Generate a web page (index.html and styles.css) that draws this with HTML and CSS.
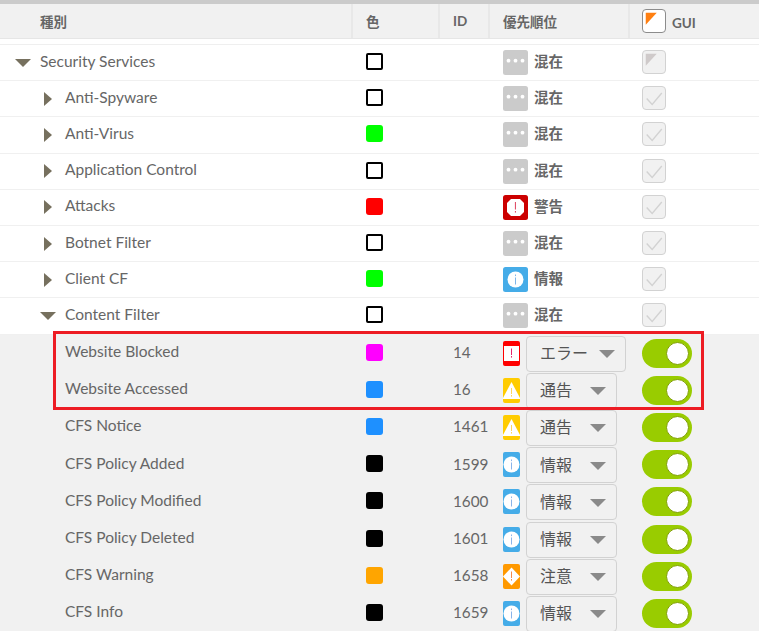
FILE: index.html
```html
<!DOCTYPE html>
<html lang="ja">
<head>
<meta charset="utf-8">
<title>種別</title>
<link rel="stylesheet" href="styles.css">
</head>
<body>
<svg class="defs" width="0" height="0" aria-hidden="true">
  <symbol id="i-mixed" viewBox="0 0 25 25"><rect width="25" height="25" rx="2.5" fill="#cbcbcb"/><circle cx="5.5" cy="10.7" r="1.9" fill="#fff"/><circle cx="12.5" cy="10.7" r="1.9" fill="#fff"/><circle cx="19.5" cy="10.7" r="1.9" fill="#fff"/></symbol>
  <symbol id="i-alert" viewBox="0 0 25 25"><rect width="25" height="25" rx="2.5" fill="#cc0000"/><polygon points="8,4 17,4 21,8 21,17 17,21 8,21 4,17 4,8" fill="#fff"/><rect x="11.9" y="7" width="1.1" height="7.5" fill="#e0506a"/><rect x="11.9" y="16" width="1.1" height="1.6" fill="#e0506a"/></symbol>
  <symbol id="i-info" viewBox="0 0 25 25"><rect width="25" height="25" rx="2.5" fill="#45ace8"/><circle cx="12.5" cy="12.5" r="8" fill="#fff"/><rect x="12" y="7.5" width="1" height="1.6" fill="#7fb6ea"/><rect x="12" y="10.5" width="1" height="7" fill="#7fb6ea"/></symbol>
  <symbol id="s-error" viewBox="0 0 17 25"><rect width="17" height="25" rx="2" fill="#ff0000"/><rect x="1" y="5" width="15" height="15" fill="#fff"/><rect x="8" y="7.5" width="1" height="6.5" fill="#e8246c"/><rect x="8" y="15" width="1" height="1.6" fill="#e8246c"/></symbol>
  <symbol id="s-warn" viewBox="0 0 17 25"><rect width="17" height="25" rx="2" fill="#ffcc00"/><polygon points="8.5,4 17,20 17,21 0,21 0,20" fill="#fff"/><rect x="8" y="10" width="1" height="6" fill="#ffd75a"/><rect x="8" y="17" width="1" height="1.6" fill="#ffd75a"/></symbol>
  <symbol id="s-info" viewBox="0 0 17 25"><rect width="17" height="25" rx="2" fill="#45ace8"/><circle cx="8.5" cy="12.5" r="8" fill="#fff"/><rect x="8" y="7.5" width="1" height="1.6" fill="#8ab4ea"/><rect x="8" y="10.5" width="1" height="7" fill="#8ab4ea"/></symbol>
  <symbol id="s-notice" viewBox="0 0 17 25"><rect width="17" height="25" rx="2" fill="#ff9900"/><polygon points="8.5,3.5 17,12.5 8.5,21.5 0,12.5" fill="#fff"/><rect x="8" y="7.5" width="1" height="6.5" fill="#f58a4a"/><rect x="8" y="15" width="1" height="1.6" fill="#f58a4a"/></symbol>
  <symbol id="c-tick" viewBox="0 0 24 24"><path d="M4 12.5 10 19 20.5 6.5" fill="none" stroke="#d2d2d2" stroke-width="1.5"/></symbol>
</svg>

<div class="grid-table">
  <div class="head">
    <div class="hcell name-h">種別</div>
    <div class="hcell">色</div>
    <div class="hcell">ID</div>
    <div class="hcell">優先順位</div>
    <div class="hcell last">
      <span class="check check-master"><svg viewBox="0 0 24 24" width="22" height="22"><polygon points="3,3 15,3 3,16" fill="#ff7f11"/></svg></span>
      <span class="gui">GUI</span>
    </div>
  </div>

  <div class="body">
    <div class="row group">
      <div class="name lv0"><span class="caret down"></span>Security Services</div>
      <div class="cc"><span class="sw outline"></span></div><div></div>
      <div class="pr"><svg class="pic"><use href="#i-mixed"/></svg><b>混在</b></div>
      <div class="gc"><span class="check"><svg viewBox="0 0 24 24" width="22" height="22"><polygon points="3,3 15,3 3,16" fill="#cfcaca"/></svg></span></div>
    </div>
    <div class="row group">
      <div class="name lv1"><span class="caret right"></span>Anti-Spyware</div>
      <div class="cc"><span class="sw outline"></span></div><div></div>
      <div class="pr"><svg class="pic"><use href="#i-mixed"/></svg><b>混在</b></div>
      <div class="gc"><span class="check"><svg class="tick"><use href="#c-tick"/></svg></span></div>
    </div>
    <div class="row group">
      <div class="name lv1"><span class="caret right"></span>Anti-Virus</div>
      <div class="cc"><span class="sw green"></span></div><div></div>
      <div class="pr"><svg class="pic"><use href="#i-mixed"/></svg><b>混在</b></div>
      <div class="gc"><span class="check"><svg class="tick"><use href="#c-tick"/></svg></span></div>
    </div>
    <div class="row group">
      <div class="name lv1"><span class="caret right"></span>Application Control</div>
      <div class="cc"><span class="sw outline"></span></div><div></div>
      <div class="pr"><svg class="pic"><use href="#i-mixed"/></svg><b>混在</b></div>
      <div class="gc"><span class="check"><svg class="tick"><use href="#c-tick"/></svg></span></div>
    </div>
    <div class="row group">
      <div class="name lv1"><span class="caret right"></span>Attacks</div>
      <div class="cc"><span class="sw red"></span></div><div></div>
      <div class="pr"><svg class="pic"><use href="#i-alert"/></svg><b>警告</b></div>
      <div class="gc"><span class="check"><svg class="tick"><use href="#c-tick"/></svg></span></div>
    </div>
    <div class="row group">
      <div class="name lv1"><span class="caret right"></span>Botnet Filter</div>
      <div class="cc"><span class="sw outline"></span></div><div></div>
      <div class="pr"><svg class="pic"><use href="#i-mixed"/></svg><b>混在</b></div>
      <div class="gc"><span class="check"><svg class="tick"><use href="#c-tick"/></svg></span></div>
    </div>
    <div class="row group">
      <div class="name lv1"><span class="caret right"></span>Client CF</div>
      <div class="cc"><span class="sw green"></span></div><div></div>
      <div class="pr"><svg class="pic"><use href="#i-info"/></svg><b>情報</b></div>
      <div class="gc"><span class="check"><svg class="tick"><use href="#c-tick"/></svg></span></div>
    </div>
    <div class="row group">
      <div class="name lv1"><span class="caret down sub"></span>Content Filter</div>
      <div class="cc"><span class="sw outline"></span></div><div></div>
      <div class="pr"><svg class="pic"><use href="#i-mixed"/></svg><b>混在</b></div>
      <div class="gc"><span class="check"><svg class="tick"><use href="#c-tick"/></svg></span></div>
    </div>

    <div class="row leaf">
      <div class="name lv1">Website Blocked</div>
      <div class="cc"><span class="sw magenta"></span></div>
      <div class="id">14</div>
      <div class="pr sel"><svg class="sic"><use href="#s-error"/></svg><span class="select wide">エラー<i></i></span></div>
      <div class="gc"><span class="toggle"></span></div>
    </div>
    <div class="row leaf">
      <div class="name lv1">Website Accessed</div>
      <div class="cc"><span class="sw blue"></span></div>
      <div class="id">16</div>
      <div class="pr sel"><svg class="sic"><use href="#s-warn"/></svg><span class="select">通告<i></i></span></div>
      <div class="gc"><span class="toggle"></span></div>
    </div>
    <div class="row leaf">
      <div class="name lv1">CFS Notice</div>
      <div class="cc"><span class="sw blue"></span></div>
      <div class="id">1461</div>
      <div class="pr sel"><svg class="sic"><use href="#s-warn"/></svg><span class="select">通告<i></i></span></div>
      <div class="gc"><span class="toggle"></span></div>
    </div>
    <div class="row leaf">
      <div class="name lv1">CFS Policy Added</div>
      <div class="cc"><span class="sw black"></span></div>
      <div class="id">1599</div>
      <div class="pr sel"><svg class="sic"><use href="#s-info"/></svg><span class="select">情報<i></i></span></div>
      <div class="gc"><span class="toggle"></span></div>
    </div>
    <div class="row leaf">
      <div class="name lv1">CFS Policy Modified</div>
      <div class="cc"><span class="sw black"></span></div>
      <div class="id">1600</div>
      <div class="pr sel"><svg class="sic"><use href="#s-info"/></svg><span class="select">情報<i></i></span></div>
      <div class="gc"><span class="toggle"></span></div>
    </div>
    <div class="row leaf">
      <div class="name lv1">CFS Policy Deleted</div>
      <div class="cc"><span class="sw black"></span></div>
      <div class="id">1601</div>
      <div class="pr sel"><svg class="sic"><use href="#s-info"/></svg><span class="select">情報<i></i></span></div>
      <div class="gc"><span class="toggle"></span></div>
    </div>
    <div class="row leaf">
      <div class="name lv1">CFS Warning</div>
      <div class="cc"><span class="sw orange"></span></div>
      <div class="id">1658</div>
      <div class="pr sel"><svg class="sic"><use href="#s-notice"/></svg><span class="select">注意<i></i></span></div>
      <div class="gc"><span class="toggle"></span></div>
    </div>
    <div class="row leaf">
      <div class="name lv1">CFS Info</div>
      <div class="cc"><span class="sw black"></span></div>
      <div class="id">1659</div>
      <div class="pr sel"><svg class="sic"><use href="#s-info"/></svg><span class="select">情報<i></i></span></div>
      <div class="gc"><span class="toggle"></span></div>
    </div>
  </div>
  <div class="callout"></div>
</div>
</body>
</html>
```
FILE: styles.css
```css
html, body {
  margin: 0;
  padding: 0;
  height: 631px;
  overflow: hidden;
  background: #fff;
}
body {
  font-family: Lato, "Noto Sans CJK JP", sans-serif;
  font-size: 15.5px;
  color: #666;
}
.defs { position: absolute; }
.grid-table {
  position: relative;
  border-top: 4px solid #cbcbcb;
}
.head, .row {
  display: grid;
  grid-template-columns: 353px 87px 50px 140px 1fr;
}
.head {
  height: 34px;
  background: #f1f1f1;
  border-bottom: 1px solid #e6e6e6;
  font-size: 13.5px;
  font-weight: 700;
  color: #666;
}
.hcell {
  display: flex;
  align-items: center;
  padding-left: 13px;
  border-right: 2px solid #e8e8e8;
  box-sizing: border-box;
  height: 34px;
}
.name-h { padding-left: 40px; }
.hcell.last { border-right: 0; padding-left: 12px; }
.gui { margin-left: 6px; margin-top: 3px; font-size: 13.5px; }
.body {
  margin-top: 5px;
  border-top: 1px solid #efefef;
}
.row { align-items: center; box-sizing: border-box; }
.group { height: 36.2px; border-bottom: 1.2px solid #f0f0f0; }
.leaf { height: 37.2px; background: #f1f1f1; }
.name { display: flex; align-items: center; white-space: nowrap; padding-bottom: 4px; }
.lv0 { padding-left: 15px; }
.lv1 { padding-left: 65px; }
.group .lv1 { padding-left: 44px; }
.caret { display: inline-block; width: 0; height: 0; margin-top: 4px; }
.caret.down {
  border-left: 8px solid transparent;
  border-right: 8px solid transparent;
  border-top: 8px solid #76705e;
  margin-right: 9px;
}
.caret.right {
  border-top: 7.5px solid transparent;
  border-bottom: 7.5px solid transparent;
  border-left: 8px solid #76705e;
  margin-right: 13px;
}
.group .caret.sub { margin-left: -4px; margin-right: 9px; }
.cc { padding-left: 13px; padding-bottom: 2px; display: flex; }
.sw {
  display: block;
  width: 17px;
  height: 17px;
  border-radius: 3px;
  box-sizing: border-box;
}
.outline { border: 2px solid #000; border-radius: 2px; background: #fff; }
.green { background: #00ff00; }
.red { background: #ff0000; }
.magenta { background: #ff00ff; }
.blue { background: #1e90ff; }
.black { background: #000; }
.orange { background: #ffa500; }
.id { padding-left: 13px; padding-bottom: 2px; font-size: 15.3px; }
.pr { display: flex; align-items: center; padding-left: 13px; }
.pr b { margin-left: 6px; margin-bottom: 4px; font-size: 14.5px; font-weight: 700; color: #666; }
.pic { width: 25px; height: 25px; }
.sic { width: 17px; height: 25px; flex: none; }
.select {
  display: flex;
  align-items: center;
  justify-content: space-between;
  box-sizing: border-box;
  width: 91px;
  height: 36px;
  margin-left: 6px;
  margin-top: 1px;
  padding: 0 10px 3px 13px;
  border: 1px solid #d2d2d2;
  border-radius: 4px;
  font-size: 16px;
  color: #555;
}
.select.wide { width: 100px; }
.select i {
  width: 0;
  height: 0;
  margin-top: 4px;
  border-left: 8px solid transparent;
  border-right: 8px solid transparent;
  border-top: 8px solid #8a8a8a;
}
.gc { padding-left: 12px; display: flex; }
.group .gc { padding-bottom: 1px; }
.check {
  display: flex;
  align-items: center;
  justify-content: center;
  box-sizing: border-box;
  width: 24px;
  height: 24px;
  border: 1px solid #d2d2d2;
  border-radius: 4px;
  background: #f1f1f1;
}
.check-master { border-color: #8c8c8c; background: #fff; flex: none; }
.tick { width: 22px; height: 22px; }
.toggle {
  position: relative;
  display: block;
  width: 50px;
  height: 29px;
  border-radius: 15px;
  background: #99cc00;
}
.toggle::after {
  content: "";
  position: absolute;
  top: 3px;
  right: 3px;
  box-sizing: border-box;
  width: 23px;
  height: 23px;
  border-radius: 50%;
  background: #fff;
  border: 1px solid #7f9f00;
}
.callout {
  position: absolute;
  left: 53px;
  top: 327px;
  width: 651px;
  height: 79px;
  box-sizing: border-box;
  border: 3px solid #ed1c24;
}
```
